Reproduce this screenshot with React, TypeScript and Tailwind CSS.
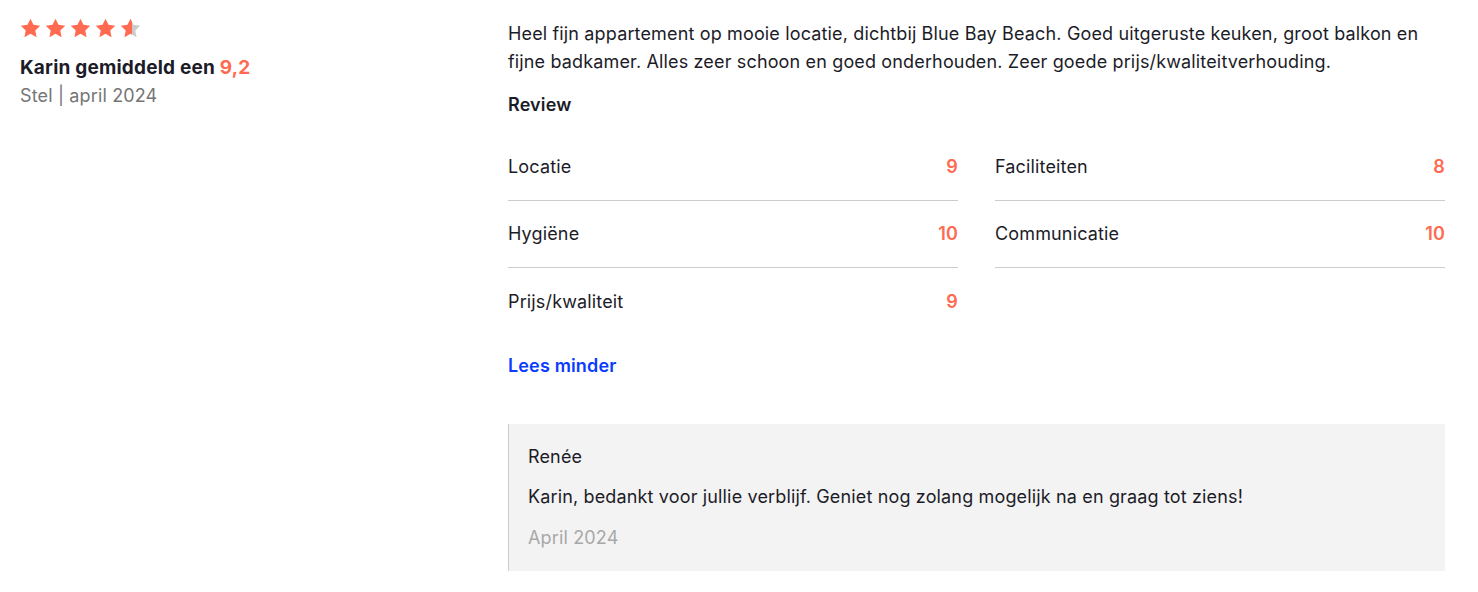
import React from 'react';

const scores = [
    { label: 'Locatie', value: '9' },
    { label: 'Faciliteiten', value: '8' },
    { label: 'Hygiëne', value: '10' },
    { label: 'Communicatie', value: '10' },
    { label: 'Prijs/kwaliteit', value: '9' },
];

const Star: React.FC<{ fill: number; id: string }> = ({ fill, id }) => (
    <svg width="21" height="20" viewBox="0 0 24 23">
        <defs>
            <linearGradient id={id}>
                <stop offset={`${fill * 100}%`} stopColor="#ff6a50" />
                <stop offset={`${fill * 100}%`} stopColor="#cccccc" />
            </linearGradient>
        </defs>
        <path
            d="M12 0.8l3.4 7.1 7.8 1-5.7 5.4 1.5 7.7L12 18.2 5 22l1.5-7.7L0.8 8.9l7.8-1z"
            fill={`url(#${id})`}
        />
    </svg>
);

const App: React.FC = () => {
    const rows = Math.ceil(scores.length / 2);

    return (
        <div className="flex bg-white px-5 pt-[20px] text-[18px] leading-[28px] tracking-[0.15px] text-[#1c1c28] font-['Inter',sans-serif]">
            <div className="w-[488px] shrink-0">
                <div className="flex gap-[4px] -mt-[2px]">
                    {[1, 1, 1, 1, 0.6].map((f, i) => (
                        <Star key={i} fill={f} id={`star-${i}`} />
                    ))}
                </div>
                <p className="mt-[16px] text-[19px] font-bold tracking-[0.2px]">
                    Karin gemiddeld een <span className="text-[#ff6a50]">9,2</span>
                </p>
                <p className="text-[#757575]">Stel | april 2024</p>
            </div>

            <div className="w-[937px] shrink-0">
                <p>
                    Heel fijn appartement op mooie locatie, dichtbij Blue Bay Beach. Goed uitgeruste keuken, groot balkon en
                    fijne badkamer. Alles zeer schoon en goed onderhouden. Zeer goede prijs/kwaliteitverhouding.
                </p>
                <p className="mt-[15px] font-semibold">Review</p>

                <div className="mt-[15px] grid grid-cols-2 gap-x-[37px]">
                    {scores.map((s, i) => {
                        const lastRow = Math.floor(i / 2) === rows - 1;
                        return (
                            <div
                                key={s.label}
                                className={
                                    'flex h-[67px] items-center justify-between ' +
                                    (lastRow ? '' : 'border-b border-[#cccccc]')
                                }
                            >
                                <span>{s.label}</span>
                                <span className="font-semibold text-[#ff6a50]">{s.value}</span>
                            </div>
                        );
                    })}
                </div>

                <button className="mt-[17px] font-semibold text-[#0a3cff]">Lees minder</button>

                <div className="mt-[44px] border-l border-[#cccccc] bg-[#f3f3f3] px-[19px] pt-[19px] pb-[19px]">
                    <p>Renée</p>
                    <p className="mt-[12px]">
                        Karin, bedankt voor jullie verblijf. Geniet nog zolang mogelijk na en graag tot ziens!
                    </p>
                    <p className="mt-[13px] text-[#a8a8a8]">April 2024</p>
                </div>
            </div>
        </div>
    );
};

export default App;
